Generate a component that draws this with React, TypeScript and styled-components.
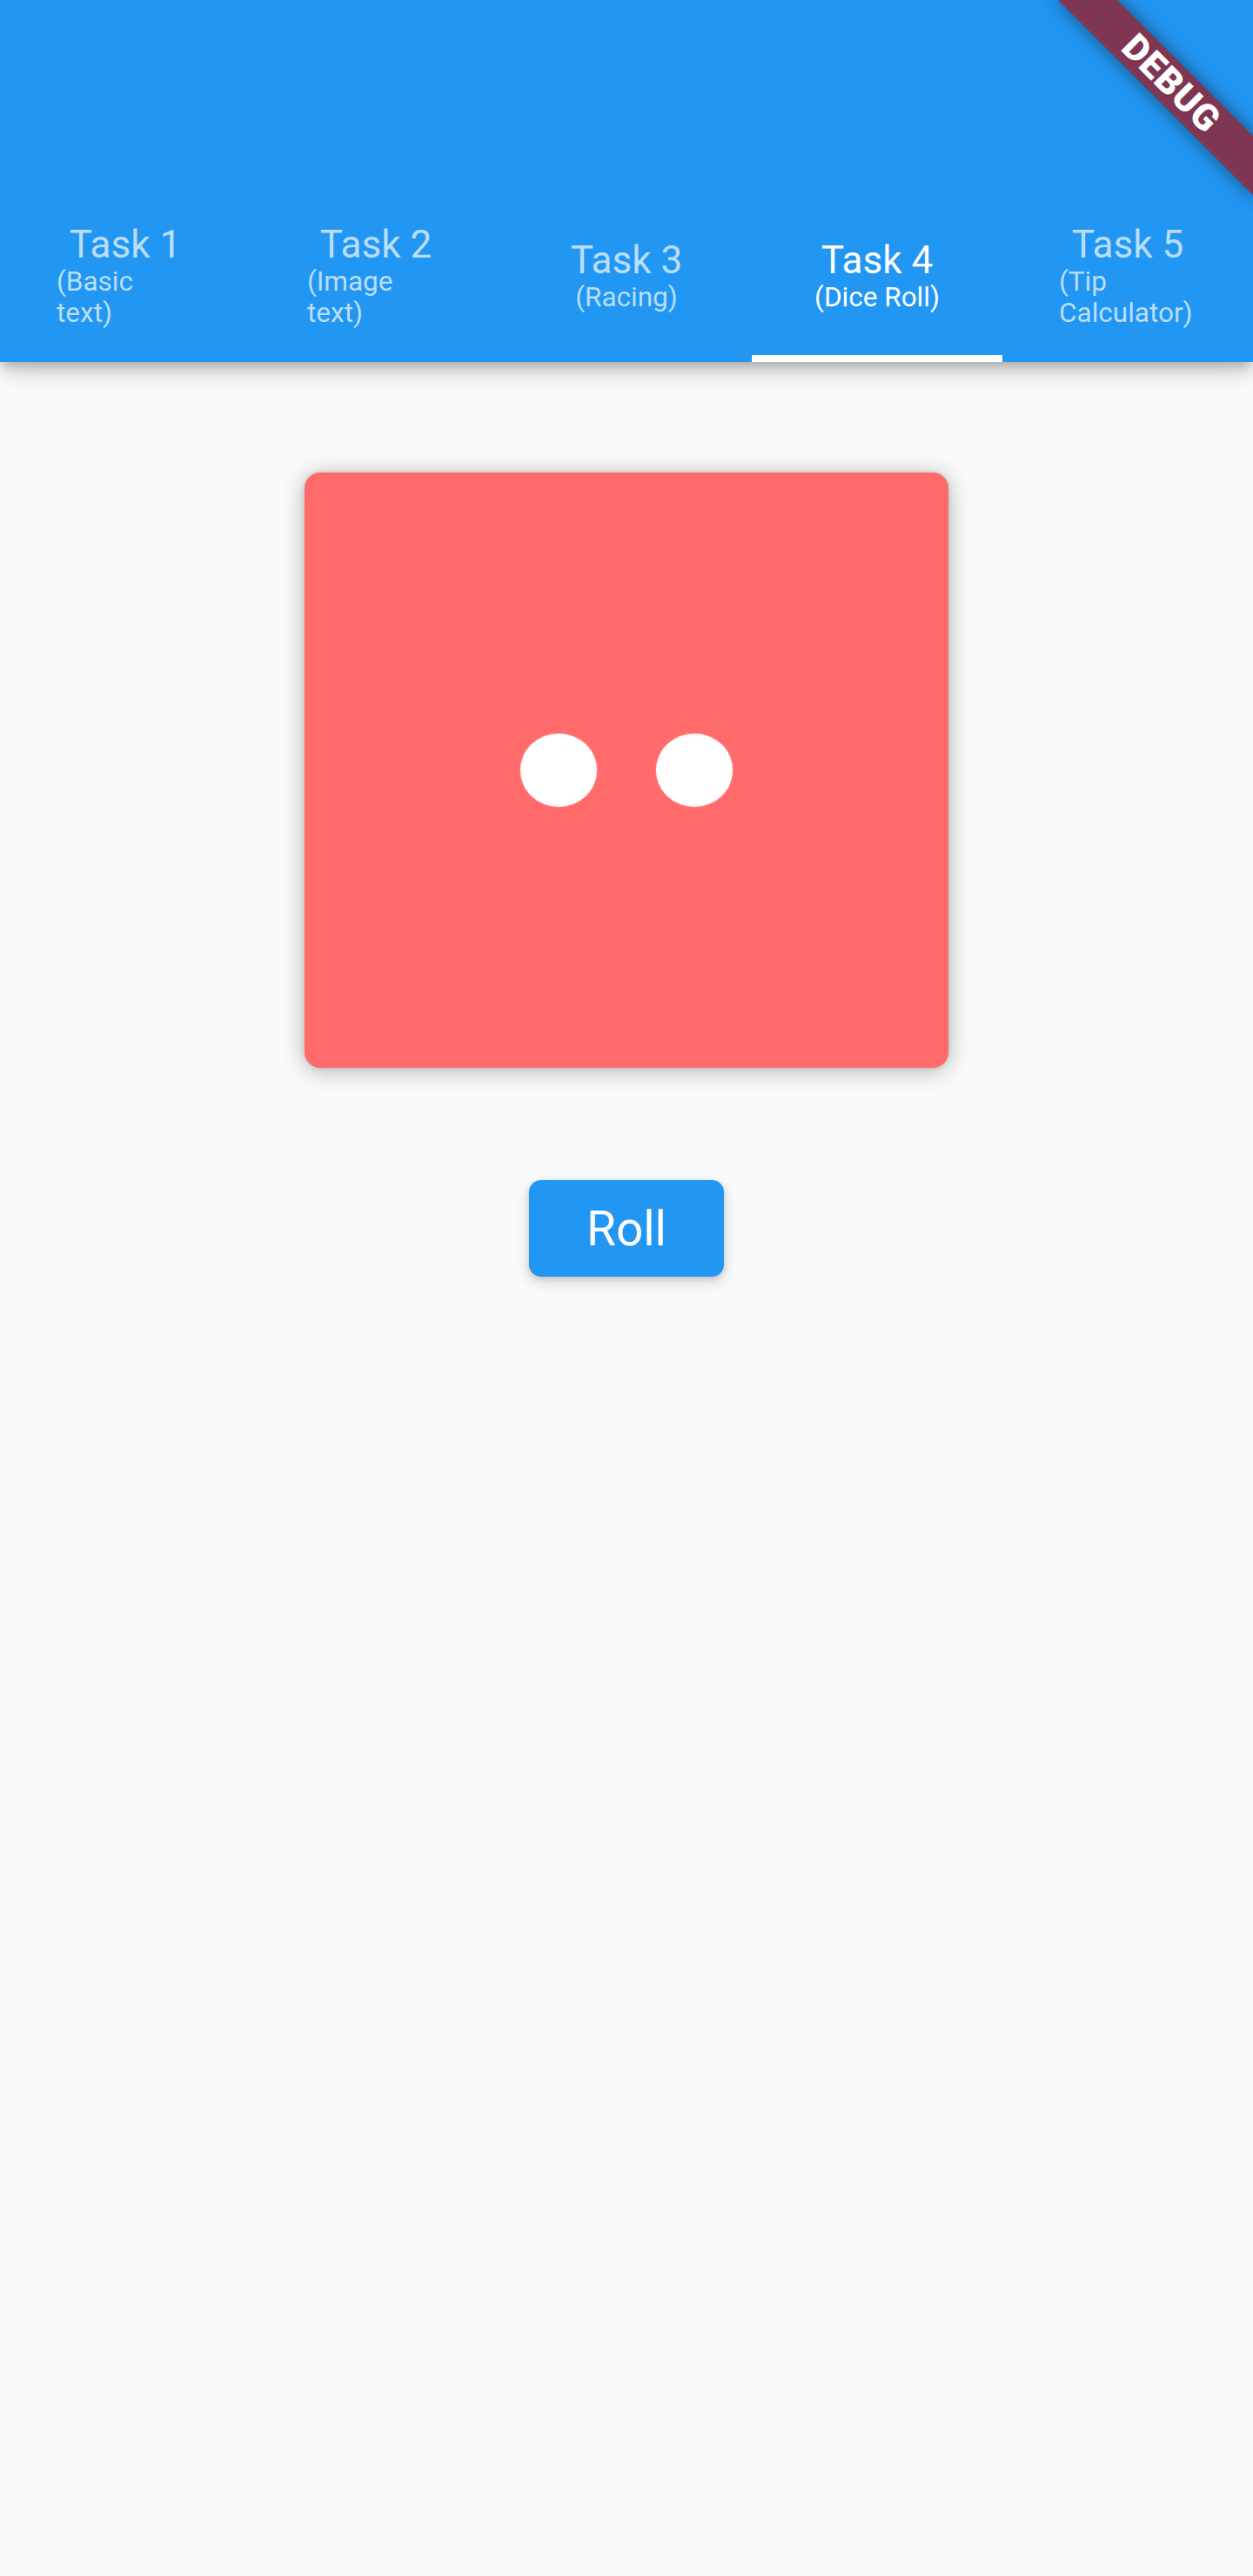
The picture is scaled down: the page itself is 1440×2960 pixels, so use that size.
import React, { useState } from "react";
import styled, { createGlobalStyle } from "styled-components";

const GlobalStyle = createGlobalStyle`
  html, body {
    margin: 0;
    padding: 0;
    background: #fafafa;
    font-family: Roboto, "Noto Sans", "Liberation Sans", sans-serif;
  }
  * { box-sizing: border-box; }
`;

const Page = styled.div`
  position: relative;
  width: 1440px;
  min-height: 2960px;
  background: #fafafa;
  overflow: hidden;
`;

const Header = styled.header`
  position: relative;
  z-index: 2;
  background: #2196f3;
  padding-top: 226px;
  box-shadow: 0 6px 12px -3px rgba(0, 0, 0, 0.2), 0 12px 18px rgba(0, 0, 0, 0.12),
    0 4px 40px rgba(0, 0, 0, 0.1);
`;

const TabRow = styled.nav`
  display: grid;
  grid-template-columns: repeat(5, 1fr);
`;

const Tab = styled.button<{ $active?: boolean }>`
  display: flex;
  flex-direction: column;
  height: 190px;
  padding: 0;
  border: 0;
  background: transparent;
  cursor: pointer;
  font-family: inherit;
  color: ${(p) => (p.$active ? "#ffffff" : "rgba(255, 255, 255, 0.7)")};
`;

const TabContent = styled.div`
  flex: 1;
  display: flex;
  flex-direction: column;
  align-items: center;
  justify-content: center;
`;

const TabTitle = styled.span`
  font-size: 44px;
  line-height: 49px;
  font-weight: 400;
`;

const TabSubtitle = styled.span<{ $wrapped?: boolean }>`
  display: inline-block;
  width: ${(p) => (p.$wrapped ? "158px" : "auto")};
  text-align: left;
  white-space: nowrap;
  font-size: 31.5px;
  line-height: 36px;
  font-weight: 400;
`;

const Indicator = styled.div<{ $active?: boolean }>`
  height: 8px;
  background: ${(p) => (p.$active ? "#ffffff" : "transparent")};
`;

const Main = styled.main`
  display: flex;
  flex-direction: column;
  align-items: center;
  padding-top: 127px;
  gap: 129px;
`;

const DiceCard = styled.div`
  width: 740px;
  height: 684px;
  border-radius: 18px;
  background: #ff6b6b;
  box-shadow: 0 3px 26px rgba(0, 0, 0, 0.3), 0 0 5px rgba(0, 0, 0, 0.12);
  display: flex;
  align-items: center;
  justify-content: center;
  gap: 68px;
`;

const Pip = styled.div`
  width: 88px;
  height: 84px;
  border-radius: 50%;
  background: #ffffff;
  box-shadow: 0 0 2px rgba(255, 255, 255, 0.6);
`;

const RollButton = styled.button`
  width: 224px;
  height: 111px;
  border: 0;
  border-radius: 14px;
  background: #2196f3;
  color: #ffffff;
  font-family: inherit;
  font-size: 55px;
  font-weight: 400;
  cursor: pointer;
  box-shadow: 0 6px 16px rgba(0, 0, 0, 0.16), 0 2px 6px rgba(0, 0, 0, 0.12);
`;

const BannerClip = styled.div`
  position: absolute;
  top: 0;
  right: 0;
  width: 320px;
  height: 320px;
  overflow: hidden;
  pointer-events: none;
  z-index: 10;
`;

const BannerBand = styled.div`
  position: absolute;
  left: 66px;
  top: 72px;
  width: 320px;
  height: 48px;
  transform: rotate(45deg);
  background: #7e3653;
  box-shadow: 0 0 22px rgba(0, 0, 0, 0.45);
  display: flex;
  align-items: center;
  justify-content: center;
  color: #ffffff;
  font-family: Roboto, "Noto Sans", sans-serif;
  font-weight: 900;
  font-size: 42px;
  line-height: 1;
  letter-spacing: 1px;
`;

const tabs = [
  { title: "Task 1", sub: ["(Basic", "text)"] },
  { title: "Task 2", sub: ["(Image", "text)"] },
  { title: "Task 3", sub: ["(Racing)"] },
  { title: "Task 4", sub: ["(Dice Roll)"] },
  { title: "Task 5", sub: ["(Tip", "Calculator)"] },
];

export default function App() {
  const [active, setActive] = useState(3);
  const [value, setValue] = useState(2);

  return (
    <Page>
      <GlobalStyle />
      <Header>
        <TabRow>
          {tabs.map((t, i) => (
            <Tab key={t.title} $active={i === active} onClick={() => setActive(i)}>
              <TabContent>
                <TabTitle>{t.title}</TabTitle>
                <TabSubtitle $wrapped={t.sub.length > 1}>
                  {t.sub.map((line, j) => (
                    <React.Fragment key={line}>
                      {j > 0 && <br />}
                      {line}
                    </React.Fragment>
                  ))}
                </TabSubtitle>
              </TabContent>
              <Indicator $active={i === active} />
            </Tab>
          ))}
        </TabRow>
      </Header>
      <Main>
        <DiceCard>
          {Array.from({ length: value }).map((_, i) => (
            <Pip key={i} />
          ))}
        </DiceCard>
        <RollButton onClick={() => setValue(1 + Math.floor(Math.random() * 2))}>Roll</RollButton>
      </Main>
      <BannerClip>
        <BannerBand>DEBUG</BannerBand>
      </BannerClip>
    </Page>
  );
}
